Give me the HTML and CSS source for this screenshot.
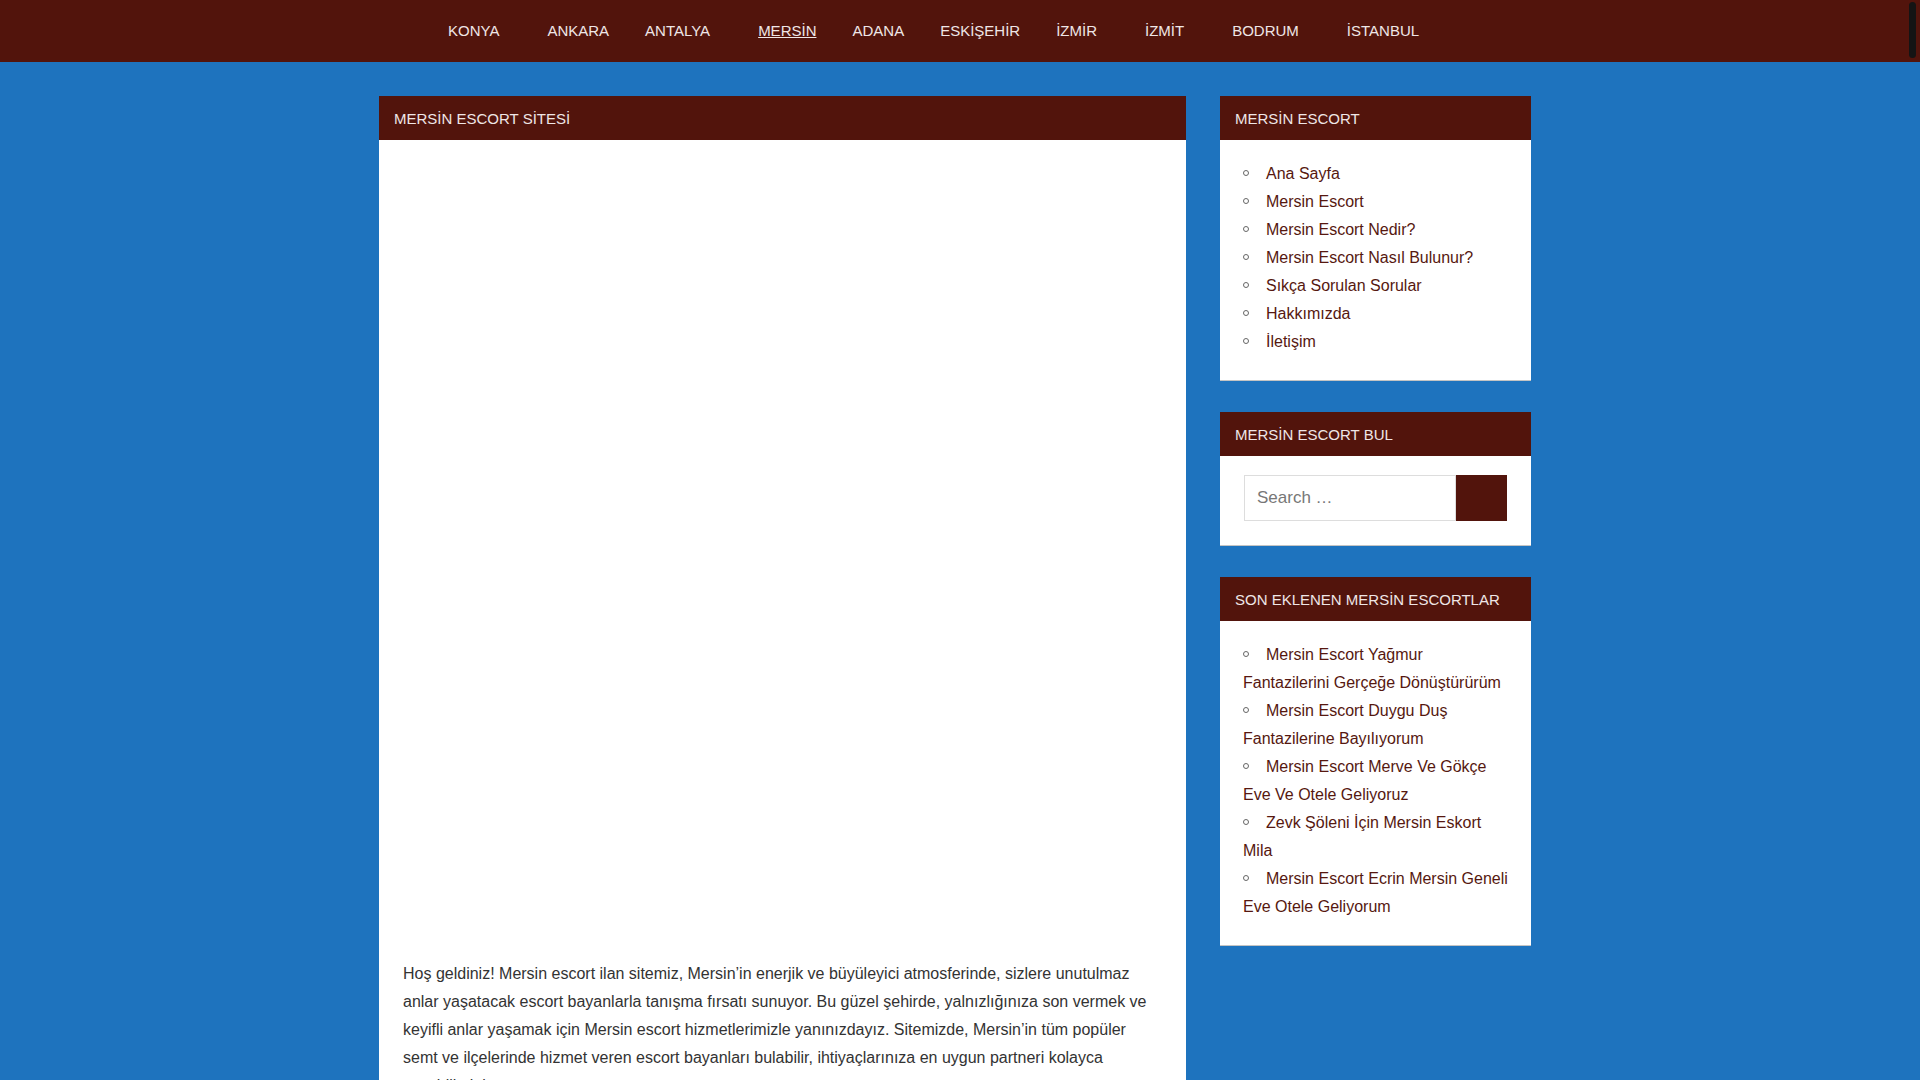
FILE: index.html
```html
<!DOCTYPE html>
<html lang="tr">
<head>
<meta charset="utf-8">
<title>Mersin Escort Sitesi</title>
<link rel="stylesheet" href="styles.css">
</head>
<body>
<header class="topnav">
  <nav class="nav-inner">
    <ul class="menu">
      <li class="has-sub"><a href="#">KONYA</a></li>
      <li><a href="#">ANKARA</a></li>
      <li class="has-sub"><a href="#">ANTALYA</a></li>
      <li class="current"><a href="#">MERSİN</a></li>
      <li><a href="#">ADANA</a></li>
      <li><a href="#">ESKİŞEHİR</a></li>
      <li class="has-sub"><a href="#">İZMİR</a></li>
      <li class="has-sub"><a href="#">İZMİT</a></li>
      <li class="has-sub"><a href="#">BODRUM</a></li>
      <li><a href="#">İSTANBUL</a></li>
    </ul>
  </nav>
</header>

<div class="page">
  <main class="content">
    <h1 class="box-title">MERSİN ESCORT SİTESİ</h1>
    <div class="content-body">
      <div class="media"></div>
      <p>Hoş geldiniz! Mersin escort ilan sitemiz, Mersin’in enerjik ve büyüleyici atmosferinde, sizlere unutulmaz anlar yaşatacak escort bayanlarla tanışma fırsatı sunuyor. Bu güzel şehirde, yalnızlığınıza son vermek ve keyifli anlar yaşamak için Mersin escort hizmetlerimizle yanınızdayız. Sitemizde, Mersin’in tüm popüler semt ve ilçelerinde hizmet veren escort bayanları bulabilir, ihtiyaçlarınıza en uygun partneri kolayca seçebilirsiniz.</p>
      <p>Mersin escort bayanlar, misafirlerine özel ve unutulmaz bir deneyim yaşatmak için her zaman hazırdır. Profillerde yer alan bilgiler sayesinde size en uygun partneri kolayca bulabilir, iletişim bilgileri üzerinden doğrudan ulaşabilirsiniz.</p>
      <p>Gizlilik ve güven ilkelerine önem veren sitemiz, kullanıcılarına her zaman kaliteli ve güncel içerik sunmayı amaçlamaktadır. Mersin’in sahil şeridinden şehir merkezine kadar pek çok bölgede hizmet veren bayanlarla tanışmak için ilanlarımızı inceleyebilirsiniz.</p>
      <p>Yenişehir, Mezitli, Toroslar, Akdeniz, Tarsus, Erdemli ve Silifke gibi bölgelerde yer alan ilanlar düzenli olarak güncellenmektedir. Aradığınız özelliklere sahip partneri bulmak için kategorileri ve son eklenen ilanları takip etmeyi unutmayın.</p>
    </div>
  </main>

  <aside class="sidebar">
    <section class="widget">
      <h2 class="box-title">MERSİN ESCORT</h2>
      <div class="widget-body">
        <ul class="links">
          <li><a href="#">Ana Sayfa</a></li>
          <li><a href="#">Mersin Escort</a></li>
          <li><a href="#">Mersin Escort Nedir?</a></li>
          <li><a href="#">Mersin Escort Nasıl Bulunur?</a></li>
          <li><a href="#">Sıkça Sorulan Sorular</a></li>
          <li><a href="#">Hakkımızda</a></li>
          <li><a href="#">İletişim</a></li>
        </ul>
      </div>
    </section>

    <section class="widget">
      <h2 class="box-title">MERSİN ESCORT BUL</h2>
      <div class="widget-body search-body">
        <form class="search-form">
          <input class="search-field" type="search" placeholder="Search …">
          <button class="search-submit" type="button" aria-label="Search"></button>
        </form>
      </div>
    </section>

    <section class="widget">
      <h2 class="box-title">SON EKLENEN MERSİN ESCORTLAR</h2>
      <div class="widget-body">
        <ul class="links">
          <li><a href="#">Mersin Escort Yağmur Fantazilerini Gerçeğe Dönüştürürüm</a></li>
          <li><a href="#">Mersin Escort Duygu Duş Fantazilerine Bayılıyorum</a></li>
          <li><a href="#">Mersin Escort Merve Ve Gökçe Eve Ve Otele Geliyoruz</a></li>
          <li><a href="#">Zevk Şöleni İçin Mersin Eskort Mila</a></li>
          <li><a href="#">Mersin Escort Ecrin Mersin Geneli Eve Otele Geliyorum</a></li>
        </ul>
      </div>
    </section>
  </aside>
</div>
<div class="scroll-thumb"></div>
</body>
</html>
```

FILE: styles.css
```css
html, body {
  margin: 0;
  padding: 0;
}

body {
  background: #1e73be;
  font-family: "Liberation Sans", Arial, sans-serif;
  font-size: 16px;
  color: #333333;
}

a {
  text-decoration: none;
}

/* ---------- top navigation ---------- */
.topnav {
  background: #52140c;
  height: 62px;
}

.nav-inner {
  width: 1172px;
  box-sizing: border-box;
  padding-left: 5px;
  margin: 0 auto;
}

.menu {
  list-style: none;
  margin: 0;
  padding: 0 0 0 51px;
  display: flex;
}

.menu a {
  display: block;
  padding: 0 18px;
  line-height: 62px;
  font-size: 15px;
  color: #efe6e6;
}

.menu .has-sub a {
  padding-right: 30px;
}

.menu .current a {
  text-decoration: underline;
}

/* ---------- page layout ---------- */
.page {
  width: 1172px;
  box-sizing: border-box;
  padding-left: 5px;
  margin: 34px auto 0;
  display: flex;
  align-items: flex-start;
  gap: 34px;
}

.content {
  width: 807px;
  flex: none;
  background: #ffffff;
}

.sidebar {
  width: 311px;
  flex: none;
}

.box-title {
  margin: 0;
  background: #52140c;
  color: #efe6e6;
  font-size: 15px;
  font-weight: normal;
  line-height: 20px;
  padding: 13px 15px 11px;
}

.content-body {
  padding: 24px 35px 40px 24px;
}

.media {
  height: 796px;
}

.content-body p {
  margin: 0 0 28px;
  line-height: 28px;
}

/* ---------- widgets ---------- */
.widget {
  background: #ffffff;
  border-bottom: 1px solid #c4c4c4;
  margin-bottom: 31px;
}

.widget-body {
  padding: 20px 21px 24px 23px;
}

.links {
  list-style: none;
  margin: 0;
  padding: 0;
}

.links li {
  line-height: 28px;
}

.links li::before {
  content: "";
  display: inline-block;
  width: 4px;
  height: 4px;
  border: 1px solid #666666;
  border-radius: 50%;
  margin-right: 17px;
  vertical-align: 3px;
}

.links a {
  color: #561810;
}

.search-body {
  padding: 19px 24px 24px 24px;
}

.search-form {
  display: flex;
  height: 46px;
}

.search-field {
  flex: 1;
  min-width: 0;
  box-sizing: border-box;
  height: 46px;
  border: 1px solid #dddddd;
  padding: 0 12px;
  font-family: "Liberation Sans", Arial, sans-serif;
  font-size: 17px;
  color: #333333;
  background: #ffffff;
  outline: none;
}

.search-field::placeholder {
  color: #777777;
}

.search-submit {
  width: 51px;
  height: 46px;
  border: none;
  background: #52140c;
  padding: 0;
}

/* overlay scrollbar thumb seen at the right edge of the window */
.scroll-thumb {
  position: fixed;
  top: 2px;
  right: 4px;
  width: 7px;
  height: 56px;
  border-radius: 4px;
  background: #141414;
}
```
